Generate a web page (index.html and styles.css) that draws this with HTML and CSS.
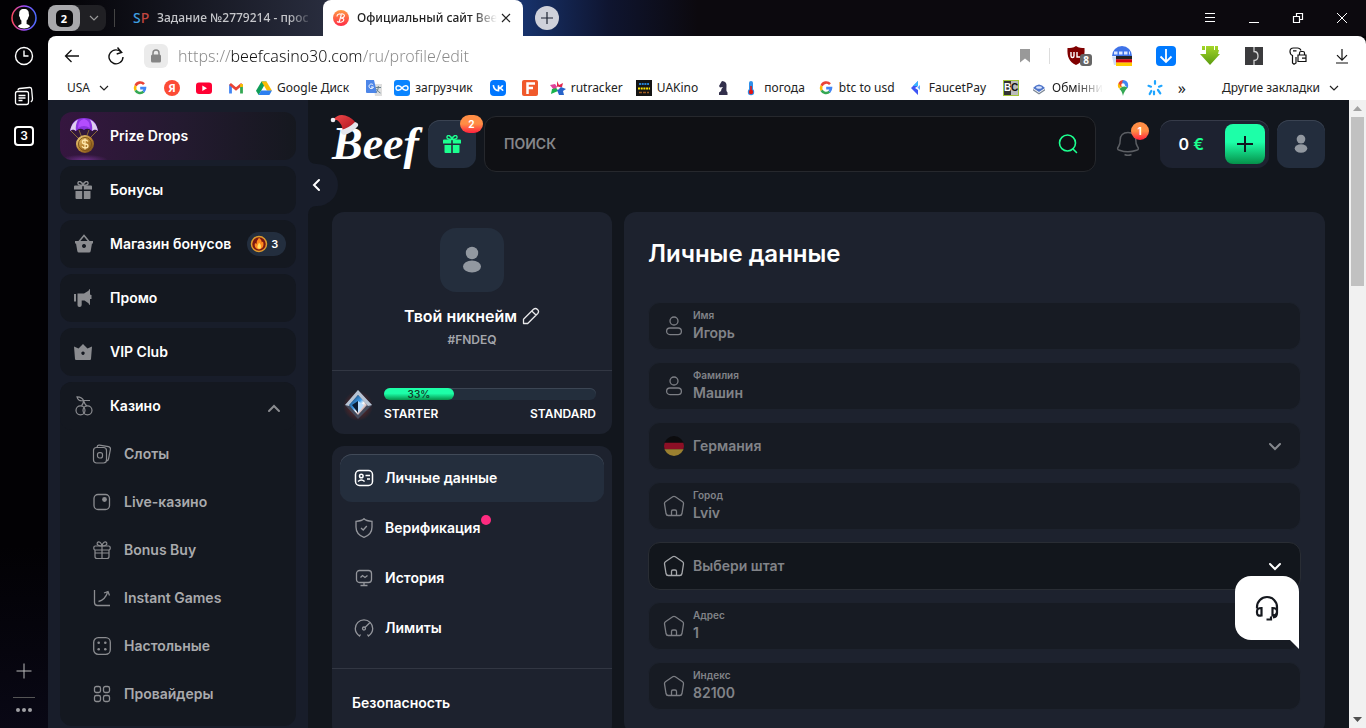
FILE: index.html
```html
<!DOCTYPE html>
<html lang="ru">
<head>
  <meta charset="UTF-8">
  <meta name="viewport" content="width=device-width, initial-scale=1.0">
  <title>Официальный сайт Beef</title>
  <link rel="stylesheet" href="styles.css">
</head>
<body>

  <!-- shared icons -->
  <svg class="sprite" aria-hidden="true">
    <defs>
      <linearGradient id="ring" x1="0" y1="0" x2="1" y2="0"><stop offset="0" stop-color="#ff4a5e"/><stop offset=".5" stop-color="#a04cff"/><stop offset="1" stop-color="#4a6cff"/></linearGradient>
      <linearGradient id="orange" x1="0" y1="0" x2="0" y2="1"><stop offset="0" stop-color="#ff9a45"/><stop offset="1" stop-color="#ff2b45"/></linearGradient>
      <linearGradient id="gold" x1="0" y1="0" x2="1" y2="1"><stop offset="0" stop-color="#f6d98a"/><stop offset=".5" stop-color="#b8832f"/><stop offset="1" stop-color="#6d4517"/></linearGradient>
      <linearGradient id="hat" x1="0" y1="0" x2="1" y2="1"><stop offset="0" stop-color="#f04a4a"/><stop offset="1" stop-color="#a80f1c"/></linearGradient>
      <linearGradient id="gem" x1="0" y1="0" x2="1" y2="1"><stop offset="0" stop-color="#0b2a4a"/><stop offset=".45" stop-color="#3f9bea"/><stop offset=".6" stop-color="#ffffff"/><stop offset="1" stop-color="#7a2a2a"/></linearGradient>
      <radialGradient id="glow"><stop offset="0" stop-color="#a02a1e" stop-opacity=".8"/><stop offset="1" stop-color="#a02a1e" stop-opacity="0"/></radialGradient>
      <linearGradient id="grass" x1="0" y1="0" x2="0" y2="1"><stop offset="0" stop-color="#a4d628"/><stop offset="1" stop-color="#5a9a10"/></linearGradient>
    </defs>
    <symbol id="chevron-down" viewBox="0 0 12 12"><path d="M2 4l4 4 4-4" fill="none" stroke="currentColor" stroke-width="1.2"/></symbol>
    <symbol id="google" viewBox="0 0 16 16">
      <g fill="none" stroke-width="2.6"><path d="M12 4.2A5 5 0 0 0 3.6 5.8" stroke="#ea4335"/><path d="M3.6 5.8a5 5 0 0 0 0 4.6" stroke="#fbbc05"/><path d="M3.6 10.3A5 5 0 0 0 11.5 11.6" stroke="#34a853"/><path d="M8.2 8.1h4.8a5 5 0 0 1-1.6 3.6" stroke="#4285f4"/></g>
    </symbol>
    <symbol id="gift-solid" viewBox="0 0 20 20">
      <path fill="currentColor" d="M1 6.5a1 1 0 0 1 1-1h7.2v4H1zM10.8 5.5H18a1 1 0 0 1 1 1v3h-8.200zM2.500 11H9.200v8H3.500a1 1 0 0 1-1-1zM10.800 11h6.700v7a1 1 0 0 1-1 1h-5.700z"/>
      <path fill="none" stroke="currentColor" stroke-width="1.4" d="M10 5.500C5.500 5.500 4.600 4.200 5 2.700c.6-2 4.200-1.400 5 2.800.8-4.200 4.400-4.800 5-2.800.4 1.500-.5 2.800-5 2.800z"/>
    </symbol>
    <symbol id="house" viewBox="0 0 22 22">
      <g fill="none" stroke="currentColor" stroke-width="1.300" stroke-linejoin="round"><path d="M9.700 1.700 2.400 6.700Q1.300 7.500 1.500 8.800L3 18.500Q3.400 20.500 5.200 20.500H16.800Q18.600 20.500 19 18.500L20.500 8.800Q20.700 7.500 19.600 6.700L12.300 1.700Q11 .9 9.700 1.700Z"/><path d="M8.500 20v-3.500q0-1.500 1.500-1.500h2q1.500 0 1.500 1.500V20"/></g>
    </symbol>
    <symbol id="person" viewBox="0 0 22 22">
      <g fill="none" stroke="currentColor" stroke-width="1.300"><circle cx="11" cy="6" r="4"/><rect x="3.600" y="13" width="14.800" height="6.600" rx="3.300"/></g>
    </symbol>
    <symbol id="avatar" viewBox="0 0 20 28"><g fill="currentColor"><circle cx="10" cy="7" r="6.200"/><ellipse cx="10" cy="20.500" rx="9" ry="6"/></g></symbol>
  </svg>

  <nav class="rail">
    <button class="rail-btn rail-user" aria-label="Профиль браузера">
      <svg width="28" height="28" viewBox="0 0 28 28"><circle cx="14" cy="14" r="12" fill="#0a0a0c" stroke="url(#ring)" stroke-width="1.500"/><path d="M14 5c3.500 0 5 2 4.800 5 .6 1 .3 2.500-.4 3-.3 2-1 3-1.800 3.600V20c2 .8 3.500 1.500 3.500 2.300-3 3-9 3-12.200 0 0-.8 1.500-1.500 3.500-2.300v-3.400C10.500 16 10 15 9.800 13c-.8-.6-1-2-.5-3C9 7 10.500 5 14 5z" fill="#fff"/></svg>
    </button>
    <button class="rail-btn" aria-label="История">
      <svg width="20" height="20" viewBox="0 0 20 20" fill="none" stroke="#fff" stroke-width="1.400"><circle cx="10" cy="10" r="8.500"/><path d="M10 4.500V10h4.500"/></svg>
    </button>
    <button class="rail-btn" aria-label="Коллекции">
      <svg width="20" height="20" viewBox="0 0 20 20" fill="none" stroke="#fff" stroke-width="1.300"><rect x="1.500" y="5.500" width="13" height="13" rx="2"/><path d="M4 4.200Q4 2.700 5.500 2.500L15.500 1.500Q17.300 1.300 17.600 3L18.500 13Q18.600 15 16.800 15.800M4.500 9.500h7M4.500 12h7M4.500 14.500h4"/></svg>
    </button>
    <button class="rail-btn"><span class="rail-count">3</span></button>
    <div class="rail-bottom">
      <button class="rail-small" aria-label="Добавить"><svg width="16" height="16" viewBox="0 0 16 16" stroke="#bbb"><path d="M.5 8h15M8 .5v15"/></svg></button>
      <hr>
      <button class="rail-small" aria-label="Ещё"><svg width="18" height="6" viewBox="0 0 18 6" fill="#a0a0a4"><circle cx="3" cy="3" r="2"/><circle cx="9" cy="3" r="2"/><circle cx="15" cy="3" r="2"/></svg></button>
    </div>
  </nav>

  <div class="window">
    <header class="tabs">
      <button class="tab-group"><span class="tab-count"><b>2</b></span><svg width="12" height="12"><use href="#chevron-down"/></svg></button>
      <span class="tab-sep"></span>
      <a class="tab" href="#"><span class="sp"><i>S</i>P</span><span class="tab-title">Задание №2779214 - прос</span></a>
      <div class="tab active">
        <svg width="16" height="16" viewBox="0 0 16 16"><circle cx="8" cy="8" r="8" fill="url(#orange)"/><path d="M4 11.500c2 1.500 6.500.8 6.800-1.500.2-1.500-1.300-2-2.800-1.900 2 0 3.600-1.300 3.400-2.800C11.200 3.800 9 3.500 7 4.300M8.500 4 6.200 12M4.200 6.500C3.800 5 5 4 7 3.700" fill="none" stroke="#fff" stroke-width="1.100"/></svg>
        <span class="tab-title">Официальный сайт Bee</span>
        <button class="tab-close" aria-label="Закрыть вкладку"><svg width="10" height="10" viewBox="0 0 10 10" stroke="#222" stroke-width="1.200"><path d="M1 1l8 8M9 1 1 9"/></svg></button>
      </div>
      <button class="new-tab" aria-label="Новая вкладка"><svg width="12" height="12" viewBox="0 0 12 12" stroke="#1d2333" stroke-width="1.200"><path d="M0 6h12M6 0v12"/></svg></button>
      <div class="window-btns">
        <button aria-label="Меню"><svg width="12" height="12" viewBox="0 0 12 12" stroke="#fff"><path d="M1 1.500h10M1 5.500h10M1 9.500h10"/></svg></button>
        <button aria-label="Свернуть"><svg width="12" height="12" viewBox="0 0 12 12" stroke="#fff"><path d="M1 10.500h10"/></svg></button>
        <button aria-label="Развернуть"><svg width="12" height="12" viewBox="0 0 12 12" fill="none" stroke="#fff" stroke-width="1.200"><path d="M1.500 4.500h6v6h-6zM4.500 4.500v-3h6v6h-3"/></svg></button>
        <button aria-label="Закрыть"><svg width="12" height="12" viewBox="0 0 12 12" stroke="#fff"><path d="M1 1l10 10M11 1 1 11"/></svg></button>
      </div>
    </header>

    <div class="browser-top">
      <div class="toolbar">
        <button class="tool" aria-label="Назад"><svg width="16" height="16" viewBox="0 0 16 16" fill="none" stroke="#111" stroke-width="1.300"><path d="M15 8H1.500M7.500 2l-6 6 6 6"/></svg></button>
        <button class="tool" aria-label="Обновить"><svg width="18" height="18" viewBox="0 0 18 18" fill="none" stroke="#111" stroke-width="1.400"><path d="M14.500 5.500A7 7 0 1 0 16 10M10.500 .5l4.200 5-5 1.500"/></svg></button>
        <button class="lock" aria-label="Соединение защищено"><svg width="12" height="14" viewBox="0 0 12 14"><rect x="1" y="5.500" width="10" height="8" rx="1.500" fill="#858585"/><path d="M3 6V4a3 3 0 0 1 6 0v2" fill="none" stroke="#858585" stroke-width="1.500"/></svg></button>
        <input class="address" type="text" aria-label="Адрес страницы" value="https://beefcasino30.com/ru/profile/edit">
        <button class="mark" aria-label="В закладки"><svg width="10" height="14" viewBox="0 0 10 14"><path d="M0 0h10v13.500L5 9.500 0 13.500z" fill="#999"/></svg></button>
        <span class="tool-sep"></span>
        <button class="tool ext" aria-label="uBlock"><svg width="22" height="20" viewBox="0 0 22 20"><path d="M9 0c3 2 5.500 2 8.500 2 .5 9-1.500 13.500-8.500 17C2 15.500 0 11 .5 2 3.500 2 6 2 9 0z" fill="#800000"/><path d="M4 6v4q0 1.500 1.500 1.500T7 10V6M10 6v5h3" fill="none" stroke="#fff" stroke-width="1.400"/></svg><span class="ext-badge">8</span></button>
        <button class="tool" aria-label="Переводчик"><svg width="20" height="20" viewBox="0 0 20 20"><path d="M0 10A10 10 0 0 1 20 10z" fill="#3e72e8"/><path d="M0 10.500h4V19H2z" fill="#cddcf7"/><path d="M2 7h16" stroke="#dbe7ff" stroke-width="3" stroke-dasharray="3.500 1.500"/><path d="M4 10h16v3.500H4z" fill="#222"/><path d="M4 13.300h16v3.400H4z" fill="#d9000f"/><path d="M4 16.600h16V20H4z" fill="#fc0"/></svg></button>
        <button class="tool" aria-label="Скачать видео"><svg width="20" height="20" viewBox="0 0 20 20"><rect width="20" height="20" rx="4" fill="#007aff"/><path d="M10 3v12.500M4.500 10.500 10 16l5.500-5.500" fill="none" stroke="#fff" stroke-width="1.800"/></svg></button>
        <button class="tool" aria-label="SaveFrom"><svg width="20" height="20" viewBox="0 0 20 20"><path d="M2 0h3v4H2zM6 0h8v4h5L18 8h2L10 19 0 8h6zM15 0h3v4h-3z" fill="url(#grass)"/></svg></button>
        <button class="tool" aria-label="Расширение"><svg width="18" height="18" viewBox="0 0 18 18"><rect width="18" height="18" fill="#3b3b3d"/><path d="M9 0v4.500q4 0 4 4.500t-4 4.500V18" fill="none" stroke="#d5d5d5" stroke-width="1.300"/></svg></button>
        <button class="tool" aria-label="Пароли"><svg width="18" height="18" viewBox="0 0 18 18" fill="none" stroke="#111" stroke-width="1.200"><path d="M12 3.500Q11 1 8.500 1H4.500Q1 1 1 4.500 1 7.500 3.500 8.500V16l1.500 1.200L7 16V10M4 3.800h3.500"/><path d="M9 8h8v6.500H9zM10.500 8V6q0-1.500 1.500-1.500h2Q15.500 4.500 15.500 6v2M13 11.200h4"/></svg></button>
        <button class="tool" aria-label="Загрузки"><svg width="14" height="16" viewBox="0 0 14 16" fill="none" stroke="#111" stroke-width="1.200"><path d="M7 1v11M2 7.200l5 5 5-5M1 15h12"/></svg></button>
      </div>

      <nav class="bookmarks">
        <button class="folder">USA <svg width="12" height="12"><use href="#chevron-down"/></svg></button>
        <a href="#" aria-label="Google"><svg width="16" height="16"><use href="#google"/></svg></a>
        <a href="#"><span class="ya">Я</span></a>
        <a href="#" aria-label="YouTube"><svg width="16" height="16" viewBox="0 0 16 16"><rect y="2.500" width="16" height="11.500" rx="3" fill="#ff0033"/><path d="M6.300 5.500v5.500l4.700-2.700z" fill="#fff"/></svg></a>
        <a href="#" aria-label="Gmail"><svg width="16" height="16" viewBox="0 0 16 16" fill="none" stroke-width="2.800"><path d="M2.500 13.500V4.500" stroke="#4285f4"/><path d="M13.500 13.500V4.500" stroke="#34a853"/><path d="M2 4l6 5 6-5" stroke="#ea4335"/><path d="M13.500 7V4" stroke="#fbbc04"/></svg></a>
        <a class="named" href="#"><svg width="16" height="16" viewBox="0 0 16 16"><path d="M5.500 1.500h5L5 11l-2.400 4L0 10.800z" fill="#0f9d58"/><path d="M5.500 1.500h5L16 10.800h-5z" fill="#fbbc04"/><path d="M5.200 10.500H16L13.400 15H2.600z" fill="#2d7ff0"/></svg>Google Диск</a>
        <a href="#" aria-label="Переводчик"><svg width="16" height="16" viewBox="0 0 16 16"><path d="M7 4h9v12H9z" fill="#dfdfdf"/><path d="M0 0h8l3 13H1q-1 0-1-1z" fill="#4d86e8"/><path d="M7.200 5A2.300 2.300 0 1 0 7.500 7H5" fill="none" stroke="#fff"/><path d="M9.500 7.500H15M12.300 6v1.500Q12 11 10 12.500M10.500 9Q12 12 14.500 13" fill="none" stroke="#6b8390"/></svg></a>
        <a class="named" href="#"><svg width="16" height="16" viewBox="0 0 16 16"><rect width="16" height="16" rx="3" fill="#0a84ff"/><path d="M8 8C6 5.300 2 4.800 2 8s4 2.700 6 0 6-3.200 6 0-4 2.700-6 0z" fill="none" stroke="#fff" stroke-width="1.500"/></svg>загрузчик</a>
        <a href="#" aria-label="VK"><svg width="16" height="16" viewBox="0 0 16 16"><rect width="16" height="16" rx="4" fill="#07f"/><path d="M3.300 5.200Q4 10.500 8.500 10.700V5.200M12.700 5.200Q12 7.500 8.500 8q3.500.5 4.500 2.800" fill="none" stroke="#fff" stroke-width="1.600"/></svg></a>
        <a href="#" aria-label="Forum"><svg width="16" height="16" viewBox="0 0 16 16"><rect width="16" height="16" rx="2" fill="#f0592b"/><path d="M5.500 14V3.500H13M5.500 8H11" fill="none" stroke="#fff" stroke-width="2.500"/></svg></a>
        <a class="named" href="#"><svg width="16" height="16" viewBox="0 0 16 16"><path d="M7 1l2 4 4-2-1 4H7z" fill="#e0264d"/><path d="M0 5l5-1 3 4-4 2z" fill="#e0439a"/><path d="M1 14l1-5 5-1 1 3z" fill="#18b34b"/><path d="M9 15l-2-5 4-3 5 2-3 2 1 4z" fill="#2763c9"/><circle cx="8" cy="8" r="1.500" fill="#fff"/></svg>rutracker</a>
        <a class="named" href="#"><svg width="16" height="16" viewBox="0 0 16 16"><rect width="16" height="16" fill="#141414"/><path d="M3 4h10" stroke="#2480d0" stroke-width="2" stroke-dasharray="2 .7"/><path d="M2 8.500h12" stroke="#ffe600" stroke-width="2" stroke-dasharray="2 .7"/><path d="M3 12.500h10" stroke="#9c5a20" stroke-width="1.500" stroke-dasharray="3 1"/></svg>UAKino</a>
        <a href="#" aria-label="Шахматы"><svg width="16" height="16" viewBox="0 0 16 16"><path d="M4 15v-2.500l2-1.500Q6 9 8 7L5 7.500 4 6l2-3.500L7 1q5 .5 4.500 5-.2 3 0 5l1 1.500V15z" fill="#322f4b"/></svg></a>
        <a class="named" href="#"><svg width="16" height="16" viewBox="0 0 16 16"><path d="M8 3v8" stroke="#2f8fe8" stroke-width="4" stroke-linecap="round"/><circle cx="8" cy="12" r="3.200" fill="#2f8fe8"/><circle cx="8" cy="12" r="2.200" fill="#e01515"/><path d="M8 6v6" stroke="#e01515" stroke-width="1.600"/></svg>погода</a>
        <a class="named" href="#"><svg width="16" height="16"><use href="#google"/></svg>btc to usd</a>
        <a class="named" href="#"><svg width="16" height="16" viewBox="0 0 16 16"><path d="M10 1v5L7 8l3 2v5L3 8z" fill="#3e55f5"/><path d="M10 1v5H5z" fill="#38b6ff"/><path d="M12 5v5L9.500 7.500z" fill="#5fa7ff"/></svg>FaucetPay</a>
        <a href="#"><span class="bc"><i>B</i>C</span></a>
        <a class="named cut" href="#"><svg width="16" height="16" viewBox="0 0 16 16"><path d="M2 9l6 4 6-4v1.500L8 14.500 2 10.500z" fill="#7d8896"/><path d="M2 8q6-7 12 0L8 12z" fill="#4f75c9"/><ellipse cx="8" cy="7.500" rx="3" ry="1.300" fill="#dbe6ff"/></svg><span>Обмінни</span></a>
        <a href="#" aria-label="Карты"><svg width="16" height="16" viewBox="0 0 16 16"><path d="M8 16Q7 11 4.500 9L8 6l5 1.500Q9 11 8 16z" fill="#34a853"/><path d="M4.300 8.800A5 5 0 0 1 3.500 3L8 5.500z" fill="#fbbc04"/><path d="M3.500 3Q5 .2 8 0l1.500 3.500L6 7z" fill="#ea4335"/><path d="M8 0q5 .3 5.200 5 0 1.500-.5 3L9.500 5 7 3z" fill="#4285f4"/><circle cx="8" cy="5" r="1.800" fill="#fff"/></svg></a>
        <a href="#" aria-label="Метео"><svg width="16" height="16" viewBox="0 0 16 16" stroke="#1fa5ff" stroke-width="2.200" stroke-linecap="round"><path d="M8 1.200v2.600M1.500 5.800l2.500.9M14.500 5.800l-2.500.9M4.300 11l-1.600 3M7 11.500v2.800M11 10l2.300 3.300"/></svg></a>
        <button class="more" aria-label="Ещё закладки">»</button>
        <button class="folder other">Другие закладки <svg width="12" height="12"><use href="#chevron-down"/></svg></button>
      </nav>
    </div>

    <div class="viewport">
      <aside class="sidebar">
        <a class="side-item prize" href="#">
          <svg class="parachute" width="32" height="38" viewBox="0 0 32 38"><path d="M3 14l9 9M29 14l-9 9M11 13l3 8M21 13l-3 8" stroke="#8a6a35"/><path d="M2 14Q4 1 16 1t14 13q-3-3-6 0-4-4-8-1-4-3-8 1-3-3-6 0z" fill="#8c35e0"/><path d="M2 14Q4 5 10 2.500 7 8 8 14q-3-3-6 0zM30 14Q28 5 22 2.500 25 8 24 14q3-3 6 0z" fill="#ddd0ee"/><path d="M10 11Q10 3 16 2q6 1 6 9-6-4-12 0z" fill="#b44dff"/><circle cx="17" cy="27" r="9" fill="url(#gold)"/><circle cx="17" cy="27" r="6.500" fill="none" stroke="#7c5218"/><path d="M20 24.500q-1-1.500-3-1.500-2.600 0-2.600 2t2.800 2q2.800 0 2.800 2T17 31q-2.200 0-3-1.700M17 21.500v11" fill="none" stroke="#ffe7aa" stroke-width="1.300"/></svg>
          Prize Drops
        </a>
        <a class="side-item" href="#"><svg width="20" height="20"><use href="#gift-solid"/></svg>Бонусы</a>
        <a class="side-item" href="#"><svg width="20" height="20" viewBox="0 0 20 20"><path d="M5 7.500 10 1.500l5 6" fill="none" stroke="currentColor" stroke-width="1.500"/><path fill="currentColor" fill-rule="evenodd" d="M1 7h18v2.500h-1L16.700 17q-.2 1.500-1.700 1.500H5q-1.500 0-1.700-1.500L2 9.500H1zM10 10a2 2 0 1 0 .01 0z"/></svg>Магазин бонусов
          <span class="coins"><svg width="18" height="18" viewBox="0 0 18 18"><circle cx="9" cy="9" r="7.500" fill="#7a1712" stroke="#dc9b2f" stroke-width="1.500"/><path d="M9 2.800q3.500 3 2.500 4.700L13 6.500q2 6.500-4 8Q3.500 13.500 5 8l1.500 1Q6.500 5.500 9 2.800z" fill="#ff8a1e"/><path d="M9 7.500q3 3 1.500 6Q7 14.500 7.500 11z" fill="#ffe065"/></svg>3</span></a>
        <a class="side-item" href="#"><svg width="20" height="20" viewBox="0 0 20 20"><path fill="currentColor" d="M1 6h2v7.500H1zM4.500 5.500H11L15.500 2.800q.5-1.800 1.500-1.800v5q1.500 1.500 0 5v6q-1.200 0-1.500-1.800L11.500 12.500H8.700V17q0 2-2.200 2t-2-2z"/><path d="M17.500 7v4" stroke="currentColor" stroke-width="2"/></svg>Промо</a>
        <a class="side-item" href="#"><svg width="20" height="20" viewBox="0 0 20 20"><path fill="currentColor" fill-rule="evenodd" d="M1 4.500l4.500 2L10 2l4.500 4.500 4.500-2L18 17q-.1 1-1 1H3q-.9 0-1-1zM10 9.500a1.700 1.700 0 1 0 .01 0z"/></svg>VIP Club</a>
        <div class="side-group">
          <button class="side-item open"><svg width="20" height="20" viewBox="0 0 20 20" fill="none" stroke="currentColor" stroke-width="1.200"><circle cx="7.500" cy="14.300" r="4.500"/><circle cx="14.500" cy="14.300" r="4.500"/><path d="M8.500 9.800Q10.500 8 10.500 4.500 12 9 14 9.800M10.500 4.500H17M10.500 4.500Q9.500 1 4 .8q1 5 6.500 3.700z"/></svg>Казино
            <svg class="fold" width="14" height="14" viewBox="0 0 14 14"><path d="M2 10l5-5 5 5" fill="none" stroke="currentColor" stroke-width="2" stroke-linecap="round"/></svg></button>
          <a class="sub-item" href="#"><svg width="20" height="20" viewBox="0 0 20 20" fill="none" stroke="currentColor" stroke-width="1.200"><rect x="1.500" y="3.500" width="13" height="15.500" rx="3"/><path d="M5 3Q5.500.8 7.500 1.100l9 1.500q2.300.5 1.900 2.700L16.500 15q-.4 1.700-2 2"/><rect x="5.500" y="8.600" width="5" height="5.400" rx="2"/></svg>Слоты</a>
          <a class="sub-item" href="#"><svg width="20" height="20" viewBox="0 0 20 20"><rect x="2" y="2.500" width="15.500" height="15" rx="4" fill="none" stroke="currentColor" stroke-width="1.300"/><circle cx="12.500" cy="7.500" r="2.400" fill="currentColor"/></svg>Live-казино</a>
          <a class="sub-item" href="#"><svg width="20" height="20" viewBox="0 0 20 20" fill="none" stroke="currentColor" stroke-width="1.200"><rect x="1.800" y="6" width="16.400" height="4" rx="1.500"/><path d="M3 10v6.500Q3 18.500 5 18.500h10q2 0 2-2V10M10 6v12.500M3 13h14M10 6C6 6 4.500 4.500 5.300 2.800 6.500.8 9.500 2 10 6c.5-4 3.500-5.200 4.700-3.200C15.500 4.500 14 6 10 6z"/></svg>Bonus Buy</a>
          <a class="sub-item" href="#"><svg width="20" height="20" viewBox="0 0 20 20" fill="none" stroke="currentColor" stroke-width="1.300"><path d="M2.500 2v12.500q0 3 3 3H18M6.500 13.500Q13 12 15.500 4.500M12 5l4-1.500 1.500 4"/></svg>Instant Games</a>
          <a class="sub-item" href="#"><svg width="20" height="20" viewBox="0 0 20 20"><rect x="1.700" y="1.700" width="16.600" height="16.600" rx="4.500" fill="none" stroke="currentColor" stroke-width="1.300"/><g fill="currentColor"><circle cx="6.700" cy="6.700" r="1.300"/><circle cx="13.300" cy="6.700" r="1.300"/><circle cx="6.700" cy="13.300" r="1.300"/><circle cx="13.300" cy="13.300" r="1.300"/></g></svg>Настольные</a>
          <a class="sub-item" href="#"><svg width="20" height="20" viewBox="0 0 20 20" fill="none" stroke="currentColor" stroke-width="1.300"><rect x="2.500" y="2.500" width="6" height="6" rx="1.800"/><rect x="11.500" y="2.500" width="6" height="6" rx="1.800"/><rect x="2.500" y="11.500" width="6" height="6" rx="1.800"/><rect x="11.500" y="11.500" width="6" height="6" rx="1.800"/></svg>Провайдеры</a>
        </div>
        <button class="collapse" aria-label="Свернуть меню">
          <svg width="30" height="60" viewBox="0 0 30 60"><path d="M0 0Q0 9 9 9A21 21 0 0 1 9 51Q0 51 0 60z" fill="#181d2a"/><path d="M11 25l-5 5 5 5" fill="none" stroke="#fff" stroke-width="2" stroke-linecap="round"/></svg>
        </button>
      </aside>

      <main class="content">
        <header class="topbar">
          <a class="logo" href="#">Beef<svg width="30" height="22" viewBox="0 0 30 22"><path d="M3 6Q9-2 19 3q7 4 7 8L13 18Q12 9 7 6z" fill="url(#hat)"/><circle cx="3" cy="6" r="2.300" fill="#ececf2"/><path d="M11 16Q19 14 25 8q4 1 3 4-6 7-14 9-4-1-3-5z" fill="#e6e6ec"/></svg></a>
          <button class="gift-btn" aria-label="Подарки"><svg width="20" height="20"><use href="#gift-solid"/></svg><span class="badge wide">2</span></button>
          <label class="search">
            <input type="search" placeholder="ПОИСК" aria-label="Поиск">
            <svg width="22" height="22" viewBox="0 0 22 22" fill="none" stroke="#1cff8f" stroke-width="1.600"><circle cx="10.500" cy="10" r="8"/><path d="M16 16l3.500 3.500" stroke-linecap="round"/></svg>
          </label>
          <button class="bell" aria-label="Уведомления"><svg width="24" height="26" viewBox="0 0 24 26" fill="none" stroke="#5c5f64" stroke-width="1.500"><path d="M12 1.500c-5 0-7.800 3.200-7.800 7.500 0 3-.2 4.500-1.500 6.300-1.700 2.300-1.500 3.200.8 4 5.500 2 11.500 2 17 0 2.300-.8 2.500-1.700.8-4-1.300-1.800-1.500-3.300-1.500-6.300 0-4.300-2.800-7.500-7.800-7.500z"/><path d="M8.500 23.500q3.500 1.600 7 0"/></svg><span class="badge">1</span></button>
          <div class="balance">
            <span>0 <em>€</em></span>
            <button aria-label="Пополнить"><svg width="16" height="16" viewBox="0 0 16 16" stroke="#101820" stroke-width="2"><path d="M0 8h16M8 0v16"/></svg></button>
          </div>
          <button class="user-btn" aria-label="Профиль"><svg width="14" height="20"><use href="#avatar"/></svg></button>
        </header>

        <div class="columns">
          <div class="left">
            <section class="card user-card">
              <div class="user-info">
                <div class="user-pic"><svg width="20" height="28"><use href="#avatar"/></svg></div>
                <div class="nick">Твой никнейм <button aria-label="Изменить никнейм"><svg width="18" height="18" viewBox="0 0 18 18" fill="none" stroke="#e8e8ea" stroke-width="1.300" stroke-linejoin="round"><path d="M1.500 16.500v-4.200L11.500 2.300q2-1.800 4 .2t.2 4L5.700 16.500zM10 4.200l4 3.800"/></svg></button></div>
                <div class="user-id">#FNDEQ</div>
              </div>
              <div class="level">
                <svg width="30" height="34" viewBox="0 0 30 34"><circle cx="15" cy="18" r="15" fill="url(#glow)"/><path d="M15 2l14 15-14 14L2 17z" fill="#444b5c"/><path d="M15 2l14 15-4 1L15 7 6 18l-4-1z" fill="#b7c3d3"/><path d="M15 7l9 10-9 10-9-10z" fill="url(#gem)"/><path d="M9 17l6-4v12z" fill="#0b1c33"/><path d="M15 13l6 4-6 8z" fill="#b9deff"/></svg>
                <div class="progress">
                  <div class="bar"><div class="fill" style="width: 33%">33%</div></div>
                  <div class="ranks"><span>STARTER</span><span>STANDARD</span></div>
                </div>
              </div>
            </section>

            <nav class="card menu">
              <div class="menu-list">
                <a class="menu-item current" href="#"><svg width="20" height="20" viewBox="0 0 20 20" fill="none" stroke="currentColor" stroke-width="1.500"><rect x="1.500" y="2.500" width="17" height="15" rx="4"/><circle cx="7.300" cy="8" r="1.800"/><path d="M4 13.500q3.300-3 6.600 0M11.500 7.500H16M13 11h3"/></svg><span>Личные данные</span></a>
                <a class="menu-item" href="#"><svg width="20" height="20" viewBox="0 0 20 20" fill="none" stroke="currentColor" stroke-width="1.300"><path d="M10 .8Q12 3 18 3.300V9q0 7.500-8 10.300Q2 16.500 2 9V3.300Q8 3 10 .8z"/><path d="M7 10l2.200 2 3.600-4"/></svg><span class="marked">Верификация</span></a>
                <a class="menu-item" href="#"><svg width="20" height="20" viewBox="0 0 20 20" fill="none" stroke="currentColor" stroke-width="1.300"><rect x="2.500" y="2.500" width="15" height="12" rx="3"/><path d="M10 14.500v3M6.500 17.500h7M6.500 9.500l2-2 2.500 2 2.500-2"/></svg><span>История</span></a>
                <a class="menu-item" href="#"><svg width="20" height="20" viewBox="0 0 20 20" fill="none" stroke="currentColor" stroke-width="1.300"><path d="M6.500 16.500l-1 1.500Q1.300 15 1.300 10.500a8.700 8.700 0 0 1 17.400 0q0 4.500-4.200 7.500l-1-1.500"/><circle cx="10" cy="10.500" r="1.500"/><path d="M11 9.500l5-5"/></svg><span>Лимиты</span></a>
              </div>
              <h3>Безопасность</h3>
            </nav>
          </div>

          <form class="card form">
            <h1>Личные данные</h1>
            <label class="field locked"><svg width="22" height="22"><use href="#person"/></svg><span><small>Имя</small><input type="text" value="Игорь" disabled></span></label>
            <label class="field locked"><svg width="22" height="22"><use href="#person"/></svg><span><small>Фамилия</small><input type="text" value="Машин" disabled></span></label>
            <label class="field locked"><svg width="22" height="22" viewBox="0 0 22 22"><clipPath id="round"><circle cx="11" cy="11" r="10"/></clipPath><g clip-path="url(#round)"><path d="M0 0h22v8H0z" fill="#0c0c0e"/><path d="M0 7.700h22v6.600H0z" fill="#8c0f25"/><path d="M0 14.300h22V22H0z" fill="#9b8030"/></g></svg>
              <select disabled aria-label="Страна"><option>Германия</option></select><svg class="arrow" width="14" height="14" viewBox="0 0 14 14"><path d="M2 5l5 5 5-5"/></svg></label>
            <label class="field locked"><svg width="22" height="22"><use href="#house"/></svg><span><small>Город</small><input type="text" value="Lviv" disabled></span></label>
            <label class="field"><svg width="22" height="22"><use href="#house"/></svg>
              <select aria-label="Штат"><option>Выбери штат</option></select><svg class="arrow" width="14" height="14" viewBox="0 0 14 14"><path d="M2 5l5 5 5-5"/></svg></label>
            <label class="field locked"><svg width="22" height="22"><use href="#house"/></svg><span><small>Адрес</small><input type="text" value="1" disabled></span></label>
            <label class="field locked"><svg width="22" height="22"><use href="#house"/></svg><span><small>Индекс</small><input type="text" value="82100" disabled></span></label>
          </form>
        </div>

        <button class="chat" aria-label="Поддержка"><svg width="28" height="28" viewBox="0 0 28 28" fill="none" stroke="#15181e" stroke-width="2.200"><path d="M4 14.500V13a10 10 0 0 1 20 0v6q0 4-4 4.500M8.500 14v7.500Q4 22.500 4 18.500v-1Q4 14 8.500 14zM19.500 14v7.500q4.500 0 4.500-4 0-3.500-4.500-3.500zM18 22.500v3h-4.500"/></svg></button>
      </main>

      <div class="scrollbar"><svg width="9" height="5" viewBox="0 0 9 5"><path d="M4.500 0 9 5H0z" fill="#a3a3a3"/></svg><div class="thumb"></div><svg width="9" height="5" viewBox="0 0 9 5"><path d="M0 0h9L4.500 5z" fill="#505050"/></svg></div>
    </div>
  </div>

</body>
</html>
```
FILE: styles.css
```css
* {
  box-sizing: border-box;
}

body {
  margin: 0;
  height: 100vh;
  overflow: hidden;
  display: flex;
  background: linear-gradient(#020104, #020104 75%, #090815);
  color: #fff;
  font-family: Inter, "Noto Sans", sans-serif;
  font-size: 14px;
  font-weight: 600;
  line-height: 20px;
}

button, input, select {
  font: inherit;
  color: inherit;
  background: none;
  border: 0;
  padding: 0;
  outline: none;
}

button {
  display: flex;
  align-items: center;
  justify-content: center;
  cursor: pointer;
}

a {
  color: inherit;
  text-decoration: none;
}

svg {
  flex: none;
  display: block;
}

.sprite {
  position: absolute;
  width: 0;
  height: 0;
}

/* left browser rail */
.rail {
  width: 48px;
  flex: none;
  display: flex;
  flex-direction: column;
  align-items: center;
}

.rail-btn {
  width: 48px;
  height: 40px;
}

.rail-user {
  height: 36px;
}

.rail-count {
  width: 20px;
  height: 20px;
  border: 2px solid #fff;
  border-radius: 4px;
  font-size: 12px;
  line-height: 16px;
}

.rail-bottom {
  margin-top: auto;
  padding-bottom: 12px;
  display: flex;
  flex-direction: column;
  align-items: center;
}

.rail-bottom hr {
  width: 22px;
  margin: 10px 0 6px;
  border: 0;
  border-top: 1px solid #555;
}

.rail-small {
  width: 24px;
  height: 16px;
  margin: 0 0 8px;
}

.rail-small:last-child {
  height: 12px;
  margin: 0;
}

.window {
  flex: 1;
  min-width: 0;
  display: flex;
  flex-direction: column;
}

/* tabs */
.tabs {
  height: 36px;
  flex: none;
  display: flex;
  align-items: center;
  background: linear-gradient(90deg, #020104, #282c3d 275px, #17326b 475px, #0f1530 560px, #0c090e 650px);
  font-family: "Noto Sans", sans-serif;
  font-size: 12px;
  font-weight: 500;
}

.tab-group {
  width: 58px;
  height: 26px;
  justify-content: flex-start;
  gap: 8px;
  border-radius: 8px;
  background: #202024;
  color: #999;
}

.tab-count {
  width: 32px;
  height: 26px;
  display: flex;
  align-items: center;
  justify-content: center;
  border-radius: 8px;
  background: #a8a8ab;
}

.tab-count b {
  width: 17px;
  height: 17px;
  border-radius: 5px;
  background: #0a0a0c;
  color: #fff;
  font-size: 11px;
  line-height: 17px;
}

.tab-sep {
  width: 1px;
  height: 18px;
  margin: 0 8px;
  background: #444;
}

.tab {
  width: 200px;
  height: 36px;
  padding: 0 10px;
  display: flex;
  align-items: center;
  gap: 8px;
  color: #c6c7cb;
}

.tab-title {
  flex: 1;
  overflow: hidden;
  white-space: nowrap;
  -webkit-mask-image: linear-gradient(90deg, #000 calc(100% - 24px), transparent);
  mask-image: linear-gradient(90deg, #000 calc(100% - 24px), transparent);
}

.sp {
  width: 16px;
  color: #c0453f;
  font-size: 14px;
}

.sp i {
  color: #3f9fe0;
  font-style: normal;
}

.active {
  border-radius: 8px 8px 0 0;
  background: #fff;
  color: #222;
}

.tab-close {
  width: 14px;
  height: 16px;
  margin-left: -6px;
}

.new-tab {
  width: 24px;
  height: 24px;
  margin-left: 12px;
  border-radius: 50%;
  background: #cfd1da;
}

.window-btns {
  margin-left: auto;
  display: flex;
  padding-right: 2px;
}

.window-btns button {
  width: 44px;
  height: 36px;
}

/* toolbar and bookmarks */
.browser-top {
  height: 64px;
  flex: none;
  border-radius: 8px 8px 0 0;
  background: #fff;
  color: #222;
  font-family: "Noto Sans", sans-serif;
  font-weight: 400;
}

.toolbar {
  height: 40px;
  display: flex;
  align-items: center;
  padding: 0 2px;
}

.tool {
  width: 44px;
  height: 40px;
}

.lock {
  width: 24px;
  height: 24px;
  margin: 0 10px 0 6px;
  border-radius: 6px;
  background: #ebebeb;
}

.address {
  flex: 1;
  min-width: 0;
  height: 32px;
  font-size: 16px;
  font-weight: 300;
  color: transparent;
  background: linear-gradient(90deg, #888 52px, #111 52px, #111 183px, #888 183px);
  -webkit-background-clip: text;
  background-clip: text;
}

.mark {
  width: 24px;
  height: 32px;
}

.tool-sep {
  width: 1px;
  height: 16px;
  margin: 0 6px 0 12px;
  background: #ddd;
}

.ext {
  position: relative;
}

.ext-badge {
  position: absolute;
  right: 8px;
  bottom: 10px;
  padding: 0 3px;
  border-radius: 3px;
  background: #666;
  color: #fff;
  font-size: 10px;
  font-weight: 700;
  line-height: 12px;
}

.bookmarks {
  height: 24px;
  display: flex;
  align-items: center;
  padding: 0 26px 0 19px;
  font-size: 12px;
  white-space: nowrap;
}

.bookmarks a {
  flex: none;
  display: flex;
  align-items: center;
  gap: 5px;
  padding: 0 8px;
}

.bookmarks .named {
  padding: 0 9px 0 4px;
}

.folder {
  gap: 8px;
  margin-right: 14px;
}

.folder.other {
  margin: 0 0 0 auto;
}

.ya {
  width: 16px;
  height: 16px;
  border-radius: 50%;
  background: #fc4b35;
  color: #fff;
  font-size: 11px;
  font-weight: 700;
  line-height: 16px;
  text-align: center;
}

.bc {
  width: 16px;
  height: 16px;
  display: flex;
  border: 1px solid #a4c639;
  background: #bbb;
  color: #111;
  font-family: "Liberation Sans", sans-serif;
  font-size: 10px;
  font-weight: 700;
  line-height: 14px;
}

.bc i {
  width: 7px;
  background: #333;
  color: #fff;
  font-style: normal;
}

.bookmarks .cut {
  padding-right: 4px;
}

.cut span {
  -webkit-mask-image: linear-gradient(90deg, #000 50%, transparent);
  mask-image: linear-gradient(90deg, #000 50%, transparent);
}

.more {
  margin-left: 7px;
  font-size: 16px;
}

/* page */
.viewport {
  flex: 1;
  min-height: 0;
  display: flex;
  background: #12161d;
}

.sidebar {
  position: relative;
  width: 260px;
  flex: none;
  padding: 12px;
  display: flex;
  flex-direction: column;
  gap: 6px;
  background: #181d2a;
  white-space: nowrap;
}

.side-item {
  width: 100%;
  height: 48px;
  flex: none;
  display: flex;
  align-items: center;
  justify-content: flex-start;
  gap: 17px;
  padding: 0 12px 0 13px;
  border-radius: 12px;
  background: #141820;
}

.side-item > svg {
  color: #8b8c90;
}

.prize {
  gap: 8px;
  padding-left: 8px;
  background: radial-gradient(ellipse at 24px 48px, #6b2f86, transparent 24px), linear-gradient(90deg, #35163f, #241a30 50%, #15181f);
}

.parachute {
  margin-right: 2px;
}

.coins {
  height: 24px;
  margin-left: auto;
  padding: 0 8px 0 3px;
  display: flex;
  align-items: center;
  gap: 3px;
  border-radius: 12px;
  background: #232e3e;
  font-size: 11px;
}

.side-item:has(.coins) {
  gap: 16px;
  padding-left: 14px;
}

.side-group {
  flex: none;
  padding-bottom: 8px;
  border-radius: 12px;
  background: #141820;
}

.side-group .fold {
  margin: 4px 3px 0 auto;
}

.sub-item {
  height: 48px;
  display: flex;
  align-items: center;
  gap: 12px;
  padding-left: 32px;
  color: #a9aaad;
}

.sub-item svg {
  color: #8b8c90;
}

.collapse {
  position: absolute;
  top: 55px;
  left: 100%;
}

.content {
  position: relative;
  flex: 1;
  min-width: 0;
  padding: 0 24px;
  display: flex;
  flex-direction: column;
  gap: 24px;
  overflow: hidden;
}

.topbar {
  height: 88px;
  flex: none;
  display: flex;
  align-items: center;
  gap: 8px;
}

.logo {
  position: relative;
  width: 88px;
  flex: none;
  font-family: "Liberation Serif", serif;
  font-size: 46px;
  font-style: italic;
  font-weight: 700;
  line-height: 48px;
}

.logo svg {
  position: absolute;
  top: -6px;
  left: -2px;
}

.gift-btn, .user-btn {
  position: relative;
  width: 48px;
  height: 48px;
  flex: none;
  border-radius: 12px;
  background: #232d3d;
  box-shadow: inset 0 1px #3a4352;
  color: #1cff8f;
}

.user-btn {
  color: #9298a0;
}

.badge {
  position: absolute;
  top: 2px;
  right: 3px;
  width: 18px;
  height: 18px;
  border-radius: 9px;
  background: linear-gradient(#ff8d45 50%, #ff1f3d);
  color: #fff;
  font-size: 10px;
  font-weight: 700;
  line-height: 18px;
}

.badge.wide {
  top: -5px;
  right: -7px;
  width: 23px;
}

.search {
  flex: 1;
  height: 56px;
  display: flex;
  align-items: center;
  padding: 0 16px 0 19px;
  border: 1px solid #26282d;
  border-radius: 12px;
  background: #0f1014;
}

.search input {
  flex: 1;
  min-width: 0;
}

.search input::placeholder {
  color: #85868a;
}

.bell {
  position: relative;
  width: 48px;
  height: 48px;
}

.balance {
  height: 48px;
  display: flex;
  align-items: center;
  gap: 21px;
  padding: 4px 4px 4px 19px;
  border-radius: 12px;
  background: #1d2230;
  box-shadow: inset 0 1px #363b49;
  font-size: 16px;
}

.balance em {
  color: #1cff8f;
  font-style: normal;
}

.balance button {
  width: 40px;
  height: 40px;
  border-radius: 8px;
  background: linear-gradient(#1dffa8 45%, #05914a);
}

.columns {
  display: flex;
  align-items: flex-start;
  gap: 12px;
}

.left {
  width: 280px;
  flex: none;
  display: flex;
  flex-direction: column;
  gap: 12px;
}

.card {
  border-radius: 12px;
  background: #1d222e;
}

.user-info {
  height: 159px;
  padding-top: 16px;
  display: flex;
  flex-direction: column;
  align-items: center;
  border-bottom: 1px solid #323743;
}

.user-pic {
  width: 64px;
  height: 64px;
  display: flex;
  align-items: center;
  justify-content: center;
  border-radius: 16px;
  background: #242e3d;
  color: #9298a0;
}

.nick {
  margin-top: 12px;
  display: flex;
  align-items: center;
  gap: 5px;
  font-size: 16px;
  line-height: 24px;
}

.user-id {
  color: #a4a6ab;
  font-size: 12px;
  line-height: 24px;
}

.level {
  height: 63px;
  display: flex;
  align-items: center;
  gap: 11px;
  padding: 5px 16px 0 11px;
}

.progress {
  flex: 1;
}

.bar {
  height: 12px;
  border-radius: 6px;
  background: #232e3c;
  box-shadow: inset 0 1px #3c4654;
}

.fill {
  height: 12px;
  border-radius: 6px;
  background: linear-gradient(#1dffa8 45%, #05914a);
  color: #12402c;
  font-size: 10px;
  line-height: 12px;
  text-align: center;
}

.ranks {
  margin-top: 6px;
  display: flex;
  justify-content: space-between;
  font-size: 12px;
  line-height: 16px;
}

.menu-list {
  height: 223px;
  padding: 8px;
  display: flex;
  flex-direction: column;
  gap: 2px;
  border-bottom: 1px solid #323743;
}

.menu-item {
  height: 48px;
  flex: none;
  display: flex;
  align-items: center;
  gap: 11px;
  padding: 0 14px;
  border-radius: 12px;
}

.menu-item svg {
  color: #94969c;
}

.current {
  background: #242e3d;
  box-shadow: inset 0 1px #414a58;
}

.menu-item.current svg {
  color: #fff;
}

.marked {
  position: relative;
}

.marked::after {
  content: "";
  position: absolute;
  top: -3px;
  right: -11px;
  width: 10px;
  height: 10px;
  border-radius: 50%;
  background: #ff2b80;
}

.menu h3 {
  margin: 0;
  padding: 24px 20px;
  font-size: 14px;
  font-weight: 600;
}

.form {
  flex: 1;
  min-width: 0;
  padding: 24px;
  display: flex;
  flex-direction: column;
  gap: 12px;
}

.form h1 {
  margin: 0 0 18px;
  font-size: 24px;
  font-weight: 600;
  line-height: 36px;
}

.field {
  height: 48px;
  flex: none;
  display: flex;
  align-items: center;
  gap: 8px;
  padding: 0 18px 0 14px;
  border: 1px solid #292d34;
  border-radius: 12px;
  background: #12161c;
  color: #818388;
}

.field > svg {
  color: #a5a7ab;
}

.field > span {
  flex: 1;
  display: flex;
  flex-direction: column;
  gap: 2px;
}

.field small {
  font-size: 10px;
  line-height: 12px;
}

.field input {
  height: 20px;
}

.field select {
  flex: 1;
  height: 20px;
  appearance: none;
  opacity: 1;
}

.locked {
  border-color: #1d222d;
  background: #171b23;
}

.locked > svg {
  color: #7c7e84;
}

.field .arrow {
  fill: none;
  stroke: #fff;
  stroke-width: 2;
  stroke-linecap: round;
}

.locked .arrow {
  stroke: #85888d;
}

.chat {
  position: absolute;
  right: 50px;
  bottom: 88px;
  width: 64px;
  height: 64px;
  border-radius: 16px 16px 0 16px;
  background: #fff;
}

.chat::after {
  content: "";
  position: absolute;
  top: 63px;
  right: 0;
  border-top: 10px solid #fff;
  border-left: 10px solid transparent;
}

.scrollbar {
  width: 17px;
  flex: none;
  display: flex;
  flex-direction: column;
  align-items: center;
  padding: 6px 0;
  background: #f1f1f1;
}

.thumb {
  width: 13px;
  height: 169px;
  margin: 6px 0 auto;
  background: #c1c1c1;
}
```
